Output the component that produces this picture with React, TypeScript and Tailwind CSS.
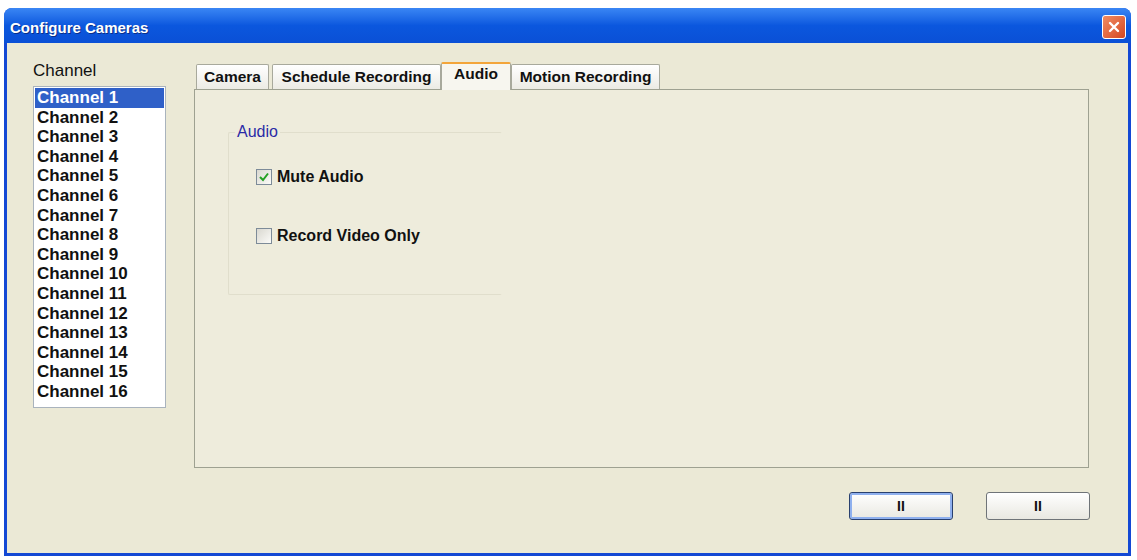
import React from "react";

const channels = Array.from({ length: 16 }, (_, i) => `Channel ${i + 1}`);

function CheckBox({ checked }: { checked: boolean }) {
  return (
    <div className="w-[16px] h-[16px] border border-[#7d8b98] bg-gradient-to-br from-[#d9d8d0] to-[#fbfbf8] flex items-center justify-center">
      {checked && (
        <svg width="12" height="12" viewBox="0 0 12 12">
          <path d="M2 6 L5 9 L10 2.5" fill="none" stroke="#23a023" strokeWidth="2" />
        </svg>
      )}
    </div>
  );
}

export default function App() {
  const font = { fontFamily: '"Liberation Sans", Arial, sans-serif' };
  return (
    <div className="w-[1137px] h-[560px] bg-white pt-[8px] pl-[4px] overflow-hidden" style={font}>
      <div className="w-[1127px] h-[548px] flex flex-col rounded-t-[8px] bg-[#1348d4] overflow-hidden">
        {/* title bar */}
        <div className="h-[35px] flex items-start justify-between bg-gradient-to-b from-[#3a86f4] via-[#0b57de] to-[#0a50d6]">
          <div className="pl-[6px] pt-[11px] text-white font-bold text-[15px] leading-[18px] [text-shadow:1px_1px_0_#0a2f8a]">
            Configure Cameras
          </div>
          <div className="mt-[7px] mr-[5px] w-[24px] h-[24px] rounded-[3px] border border-white bg-gradient-to-br from-[#f08b62] to-[#d4461f] flex items-center justify-center">
            <svg width="14" height="14" viewBox="0 0 14 14">
              <path d="M3 3 L11 11 M11 3 L3 11" stroke="white" strokeWidth="2.4" strokeLinecap="round" />
            </svg>
          </div>
        </div>
        {/* body */}
        <div className="flex-1 mx-[3px] mb-[3px] bg-[#ebe9d6] flex pl-[26px] pt-[16px]">
          {/* left column */}
          <div className="w-[133px] flex flex-col">
            <div className="h-[24px] leading-[24px] text-[17px] text-[#111]">Channel</div>
            <div className="mt-[3px] h-[322px] border border-[#a9b3bd] bg-white p-[1px]">
              {channels.map((c, i) => (
                <div
                  key={c}
                  className={
                    "h-[19.6px] leading-[19.6px] px-[2px] text-[17px] font-bold " +
                    (i === 0 ? "bg-[#2f60c8] text-white" : "text-[#111]")
                  }
                >
                  {c}
                </div>
              ))}
            </div>
          </div>
          {/* tab column */}
          <div className="ml-[28px] w-[895px] flex flex-col pt-[3px]">
            <div className="h-[27px] flex items-end pl-[2px] text-[15.5px] font-bold text-[#111]">
              <div className="h-[25px] w-[73px] flex items-center justify-center border border-b-0 border-[#a8a99c] rounded-t-[2px] bg-gradient-to-b from-white to-[#ecebe4]">
                Camera
              </div>
              <div className="ml-[3px] h-[25px] w-[169px] flex items-center justify-center border border-b-0 border-[#a8a99c] rounded-t-[2px] bg-gradient-to-b from-white to-[#ecebe4]">
                Schedule Recording
              </div>
              <div className="relative z-10 -mb-[1px] h-[28px] w-[70px] flex items-start justify-center pt-[1px] leading-[18px] border border-b-0 border-[#a8a99c] border-t-[2px] border-t-[#f3a53a] rounded-t-[2px] bg-[#f7f6ef]">
                Audio
              </div>
              <div className="h-[25px] w-[149px] flex items-center justify-center border border-b-0 border-[#a8a99c] rounded-t-[2px] bg-gradient-to-b from-white to-[#ecebe4]">
                Motion Recording
              </div>
            </div>
            <div className="h-[379px] border border-[#9ea191] bg-[#eeecdc] pl-[33px] pt-[32px]">
              <fieldset className="w-[274px] h-[173px] border border-[#e0decc] border-r-transparent rounded-[2px]">
                <legend className="ml-[6px] px-[2px] text-[16px] leading-[20px] text-[#2a2aa6]">Audio</legend>
                <div className="flex flex-col pl-[27px] pt-[27px] gap-[43px] text-[16px] font-bold text-[#111]">
                  <div className="h-[16px] flex items-center gap-[5px]">
                    <CheckBox checked />
                    <span>Mute Audio</span>
                  </div>
                  <div className="h-[16px] flex items-center gap-[5px]">
                    <CheckBox checked={false} />
                    <span>Record Video Only</span>
                  </div>
                </div>
              </fieldset>
            </div>
            <div className="mt-[24px] flex justify-end gap-[33px] -mr-[1px]">
              <div className="w-[104px] h-[28px] rounded-[3px] border border-[#29406e] shadow-[inset_0_0_0_2px_#8fb0ee] bg-gradient-to-b from-white to-[#e9e8e1] flex items-center justify-center text-[14px] font-bold text-[#111]">
                II
              </div>
              <div className="w-[104px] h-[28px] rounded-[3px] border border-[#6f7478] bg-gradient-to-b from-white to-[#e9e8e1] flex items-center justify-center text-[14px] font-bold text-[#111]">
                II
              </div>
            </div>
          </div>
        </div>
      </div>
    </div>
  );
}
